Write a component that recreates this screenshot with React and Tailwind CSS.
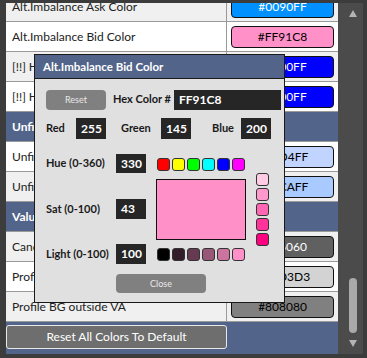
import React from "react";

const rows = [
  { label: "Alt.Imbalance Ask Color", color: "#0090FF", text: "#ffffff", bg: "bg-[#f0f0f0]" },
  { label: "Alt.Imbalance Bid Color", color: "#FF91C8", text: "#000000", bg: "bg-white" },
  { label: "[!!] High Volume Ask Color", color: "#0000FF", text: "#ffffff", bg: "bg-[#f0f0f0]" },
  { label: "[!!] High Volume Bid Color", color: "#0000FF", text: "#ffffff", bg: "bg-white" },
  { header: "Unfinished Auction" },
  { label: "Unfinished Auction High", color: "#C0D4FF", text: "#000000", bg: "bg-white" },
  { label: "Unfinished Auction Low", color: "#A8CAFF", text: "#000000", bg: "bg-[#f0f0f0]" },
  { header: "Value Area" },
  { label: "Candle Color In VA", color: "#606060", text: "#ffffff", bg: "bg-[#f0f0f0]" },
  { label: "Profile BG inside VA", color: "#D3D3D3", text: "#000000", bg: "bg-white" },
  { label: "Profile BG outside VA", color: "#808080", text: "#000000", bg: "bg-[#f0f0f0]" },
];

const topSw = ["#FF0000", "#FFFF00", "#00FF00", "#00FFFF", "#0000FF", "#FF00FF"];
const sideSw = ["#FFCCE6", "#FF99CC", "#FF66B3", "#FF3399", "#FF0080"];
const botSw = ["#000000", "#331D28", "#663A50", "#995778", "#CC74A0", "#FF91C8"];

function Sw({ c }) {
  return (
    <div
      className="w-[13px] h-[13px] rounded-[3px] border border-[#333]"
      style={{ backgroundColor: c }}
    />
  );
}

function Box({ children, w = "w-[30px]", h = "h-[20px]" }) {
  return (
    <div className={`${w} ${h} shrink-0 bg-[#262626] text-white font-bold text-[12px] flex items-center pl-[5px] leading-none whitespace-nowrap`}>
      {children}
    </div>
  );
}

const lbl = "font-bold text-[11px] whitespace-nowrap shrink-0";

export default function App() {
  return (
    <div
      className="relative w-[367px] h-[358px] bg-[#3c3c3c] overflow-hidden pt-[3px] pl-[6px] pr-[4px] flex"
      style={{ fontFamily: 'Lato, "Open Sans", sans-serif' }}
    >
      {/* table column */}
      <div className="w-[332px] h-[351px] flex flex-col">
        <div className="h-[319px] overflow-hidden">
          <div className="-mt-[11px]">
            {rows.map((r, i) =>
              r.header ? (
                <div key={i} className="h-[30px] bg-[#52648a] border-b border-[#9a9a9a] flex items-center pl-[6px] text-white font-bold text-[12px] whitespace-nowrap">
                  {r.header}
                </div>
              ) : (
                <div key={i} className={`h-[30px] ${r.bg} border-b border-[#9a9a9a] flex`}>
                  <div className="w-[221px] border-r border-[#9a9a9a] flex items-center pl-[6px] text-[12px] text-[#222] whitespace-nowrap">
                    {r.label}
                  </div>
                  <div className="flex-1 flex items-center pl-[4px] pt-[1px]">
                    <div
                      className="w-[103px] h-[22px] rounded-[4px] border border-[#111] flex items-center justify-center text-[12px]"
                      style={{ backgroundColor: r.color, color: r.text }}
                    >
                      {r.color}
                    </div>
                  </div>
                </div>
              )
            )}
          </div>
        </div>
        <div className="h-[32px] bg-[#52648a] pt-[3px]">
          <div className="w-[221px] h-[24px] bg-[#6e6e6e] border border-[#e8e8e8] rounded-[3px] flex items-center justify-center text-white text-[12px] whitespace-nowrap">
            Reset All Colors To Default
          </div>
        </div>
      </div>

      {/* scrollbar */}
      <div className="w-[25px] h-[351px] bg-[#4b4b4b] flex flex-col pl-[11px] pt-[7px] pb-[7px]">
        <svg width="8" height="7" viewBox="0 0 8 7">
          <polygon points="4,0 8,7 0,7" fill="#b4b4b4" />
        </svg>
        <div className="flex-1" />
        <div className="w-[8px] h-[55px] rounded-full bg-[#a9a9a9]" />
        <div className="h-[7px]" />
        <svg width="8" height="7" viewBox="0 0 8 7">
          <polygon points="0,0 8,0 4,7" fill="#b4b4b4" />
        </svg>
      </div>

      {/* dialog */}
      <div className="absolute left-[34px] top-[54px] w-[251px] h-[249px] border border-[#1a1a1a] bg-[#e0e0e0] flex flex-col">
        <div className="h-[24px] bg-[#52648a] border-b border-[#1a1a1a] flex items-center pl-[8px] text-white font-bold text-[11.5px] whitespace-nowrap">
          Alt.Imbalance Bid Color
        </div>
        <div className="flex-1 pl-[11px] pt-[10px] flex flex-col text-[#1a1a1a]">
          {/* reset + hex */}
          <div className="flex items-center h-[21px]">
            <div className="w-[60px] h-[20px] rounded-[4px] bg-[#808080] flex items-center justify-center text-[#e8e8e8] text-[9px]">
              Reset
            </div>
            <div className={`ml-[7px] w-[61px] ${lbl}`}>Hex Color #</div>
            <Box w="w-[107px]">FF91C8</Box>
          </div>
          {/* rgb */}
          <div className="flex items-center h-[21px] mt-[8px]">
            <div className={`w-[30px] ${lbl}`}>Red</div>
            <Box h="h-[21px]">255</Box>
            <div className={`ml-[15px] w-[40px] ${lbl}`}>Green</div>
            <Box h="h-[21px]">145</Box>
            <div className={`ml-[21px] w-[29px] ${lbl}`}>Blue</div>
            <Box h="h-[21px]">200</Box>
          </div>
          {/* hsl + swatches */}
          <div className="flex items-start mt-[15px]">
            <div className="w-[100px] shrink-0 flex flex-col">
              <div className="flex items-center h-[19px]">
                <div className={`w-[70px] ${lbl}`}>Hue (0-360)</div>
                <Box h="h-[19px]">330</Box>
              </div>
              <div className="flex items-center h-[20px] mt-[26px]">
                <div className={`w-[70px] ${lbl}`}>Sat (0-100)</div>
                <Box>43</Box>
              </div>
              <div className="flex items-center h-[20px] mt-[25px]">
                <div className={`w-[70px] ${lbl}`}>Light (0-100)</div>
                <Box>100</Box>
              </div>
            </div>
            <div className="ml-[10px] mt-[4px] flex items-center">
              <div className="flex flex-col items-start">
                <div className="flex gap-[2px] pl-[1px]">
                  {topSw.map((c) => <Sw key={c} c={c} />)}
                </div>
                <div className="mt-[8px] w-[90px] h-[61px] border border-[#111] bg-[#FF91C8]" />
                <div className="mt-[8px] flex gap-[2px] pl-[1px]">
                  {botSw.map((c) => <Sw key={c} c={c} />)}
                </div>
              </div>
              <div className="ml-[10px] flex flex-col gap-[2px]">
                {sideSw.map((c) => <Sw key={c} c={c} />)}
              </div>
            </div>
          </div>
          {/* close */}
          <div className="mt-[10px] ml-[70px] w-[90px] h-[19px] rounded-[4px] bg-[#808080] flex items-center justify-center text-[#e8e8e8] text-[9px]">
            Close
          </div>
        </div>
      </div>
    </div>
  );
}
